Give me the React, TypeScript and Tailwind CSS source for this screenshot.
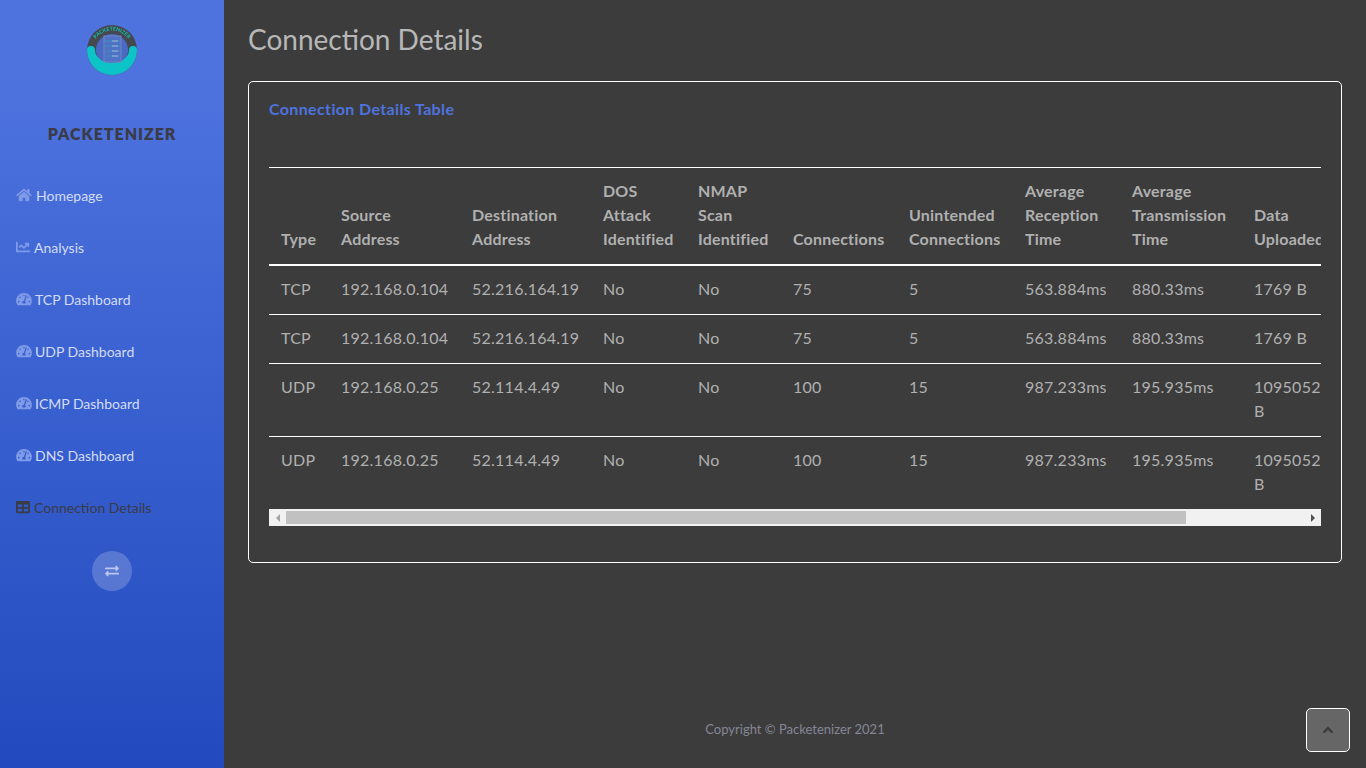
import React from 'react';
import { FaHome, FaChartLine, FaTachometerAlt, FaTable, FaExchangeAlt, FaAngleUp } from 'react-icons/fa';

const navItems = [
  { label: 'Homepage', icon: FaHome, iconClass: 'w-[16px]', gapClass: 'gap-1' },
  { label: 'Analysis', icon: FaChartLine, iconClass: 'w-[14px]', gapClass: 'gap-1' },
  { label: 'TCP Dashboard', icon: FaTachometerAlt, iconClass: 'w-[16px]', gapClass: 'gap-[3px]' },
  { label: 'UDP Dashboard', icon: FaTachometerAlt, iconClass: 'w-[16px]', gapClass: 'gap-[3px]' },
  { label: 'ICMP Dashboard', icon: FaTachometerAlt, iconClass: 'w-[16px]', gapClass: 'gap-[3px]' },
  { label: 'DNS Dashboard', icon: FaTachometerAlt, iconClass: 'w-[16px]', gapClass: 'gap-[3px]' },
  { label: 'Connection Details', icon: FaTable, iconClass: 'w-[14px]', gapClass: 'gap-1', active: true },
];

const rows = [
  ['TCP', '192.168.0.104', '52.216.164.19', 'No', 'No', '75', '5', '563.884ms', '880.33ms', '1769 B', '2314 B'],
  ['TCP', '192.168.0.104', '52.216.164.19', 'No', 'No', '75', '5', '563.884ms', '880.33ms', '1769 B', '2314 B'],
  ['UDP', '192.168.0.25', '52.114.4.49', 'No', 'No', '100', '15', '987.233ms', '195.935ms', '1095052 B', '845120 B'],
  ['UDP', '192.168.0.25', '52.114.4.49', 'No', 'No', '100', '15', '987.233ms', '195.935ms', '1095052 B', '845120 B'],
];

const Logo = () => (
  <svg width="52" height="52" viewBox="0 0 52 52" className="blur-[0.5px]">
    <circle cx="26" cy="26" r="25" fill="#45494f" />
    <circle cx="26" cy="26" r="16" fill="#4a69c4" />
    <path d="M1 26 A25 25 0 0 0 51 26 A4 4 0 0 0 43 26 A17 13 0 0 1 9 26 A4 4 0 0 0 1 26 Z" fill="#0cc4c8" />
    <rect x="18" y="12" width="17" height="26" fill="#4f72c6" stroke="#7484bd" strokeWidth="1" />
    <path d="M19 17h15M19 22h15M19 27h15M19 32h15" stroke="#3f8fc0" strokeWidth="1" />
    <path d="M26 17h6M26 22h6M26 27h6M26 32h6" stroke="#b9c4d8" strokeWidth="0.8" />
    <defs>
      <path id="logoArc" d="M6.5 26 A19.5 19.5 0 0 1 45.5 26" />
    </defs>
    <text fontSize="5.2" fontWeight="700" fill="#12bfae" style={{ fontFamily: 'Lato, sans-serif' }}>
      <textPath href="#logoArc" startOffset="50%" textAnchor="middle">PACKETENIZER</textPath>
    </text>
  </svg>
);

const App = () => {
  return (
    <div className="flex h-screen overflow-hidden bg-[#3c3c3c] text-[16px] font-['Lato',sans-serif]">
      {/* Sidebar */}
      <aside className="flex w-[224px] shrink-0 flex-col items-stretch bg-gradient-to-b from-[#4e73df] from-10% to-[#224abe]">
        <div className="flex justify-center pt-6">
          <Logo />
        </div>
        <div className="mt-[46px] text-center text-[16px] leading-6 font-extrabold tracking-[0.95px] text-[#3a3b45]">
          PACKETENIZER
        </div>
        <nav className="mt-[24px] flex flex-col">
          {navItems.map((item) => {
            const Icon = item.icon;
            return (
              <a
                key={item.label}
                className={`flex h-[52px] items-center pb-[2px] pl-4 text-[14px] ${item.gapClass} ${item.active ? 'text-[#3a3b45]' : 'text-[#d3dcf7]'}`}
              >
                <Icon className={`h-[14px] ${item.iconClass} ${item.active ? 'text-[#3a3b45]' : 'text-[#7f9be8]'}`} />
                <span>{item.label}</span>
              </a>
            );
          })}
        </nav>
        <div className="mt-[17px] flex justify-center">
          <button className="flex h-10 w-10 items-center justify-center rounded-full bg-white/20 text-[#b9c6ee]">
            <FaExchangeAlt className="h-[14px] w-[14px]" />
          </button>
        </div>
      </aside>

      {/* Main */}
      <main className="flex min-w-0 flex-1 flex-col px-6">
        <h1 className="mt-[18px] text-[28px] leading-[42px] font-normal text-[#b7b7b7]">Connection Details</h1>

        <section className="mt-[21px] rounded-[5px] border border-white px-5 pt-[15px] pb-9">
          <h2 className="mb-[46px] text-[16px] leading-6 font-bold tracking-[0.36px] text-[#4e73df]">Connection Details Table</h2>
          <div className="overflow-x-hidden">
            <table className="w-[1190px] table-fixed border-collapse text-left text-[#b0b0b0]">
              <colgroup>
                <col className="w-[60px]" />
                <col className="w-[131px]" />
                <col className="w-[131px]" />
                <col className="w-[95px]" />
                <col className="w-[95px]" />
                <col className="w-[116px]" />
                <col className="w-[116px]" />
                <col className="w-[107px]" />
                <col className="w-[122px]" />
                <col className="w-[95px]" />
                <col className="w-[122px]" />
              </colgroup>
              <thead>
                <tr className="border-t border-b-2 border-white">
                  {[
                    'Type',
                    'Source Address',
                    'Destination Address',
                    'DOS Attack Identified',
                    'NMAP Scan Identified',
                    'Connections',
                    'Unintended Connections',
                    'Average Reception Time',
                    'Average Transmission Time',
                    'Data Uploaded',
                    'Data Downloaded',
                  ].map((h) => (
                    <th key={h} className="px-3 pt-[11px] pb-[13px] align-bottom text-[16px] leading-6 font-bold tracking-[0.2px]">
                      {h}
                    </th>
                  ))}
                </tr>
              </thead>
              <tbody>
                {rows.map((row, i) => (
                  <tr key={i} className="border-b border-white last:border-b-0">
                    {row.map((cell, j) => (
                      <td key={j} className="px-3 pt-[11px] pb-[13px] align-top leading-6 tracking-[0.25px]">
                        {cell}
                      </td>
                    ))}
                  </tr>
                ))}
              </tbody>
            </table>
          </div>
          {/* horizontal scrollbar */}
          <div className="flex h-[17px] bg-[#f1f1f1]">
            <div className="flex w-[17px] items-center justify-center">
              <span className="h-0 w-0 border-y-[4px] border-r-[4px] border-y-transparent border-r-[#a3a3a3]" />
            </div>
            <div className="flex-1 py-[2px]">
              <div className="h-full w-[900px] bg-[#c1c1c1]" />
            </div>
            <div className="flex w-[17px] items-center justify-center">
              <span className="h-0 w-0 border-y-[4px] border-l-[4px] border-y-transparent border-l-[#505050]" />
            </div>
          </div>
        </section>

        <footer className="mt-auto pb-[27px] text-center text-[13px] leading-[24px] text-[#858796]">
          Copyright © Packetenizer 2021
        </footer>
      </main>

      <button className="fixed right-4 bottom-4 flex h-11 w-11 items-center justify-center rounded-[5px] border border-white bg-[#666666] text-[#3c3c3c]">
        <FaAngleUp className="h-4 w-4" />
      </button>
    </div>
  );
};

export default App;
